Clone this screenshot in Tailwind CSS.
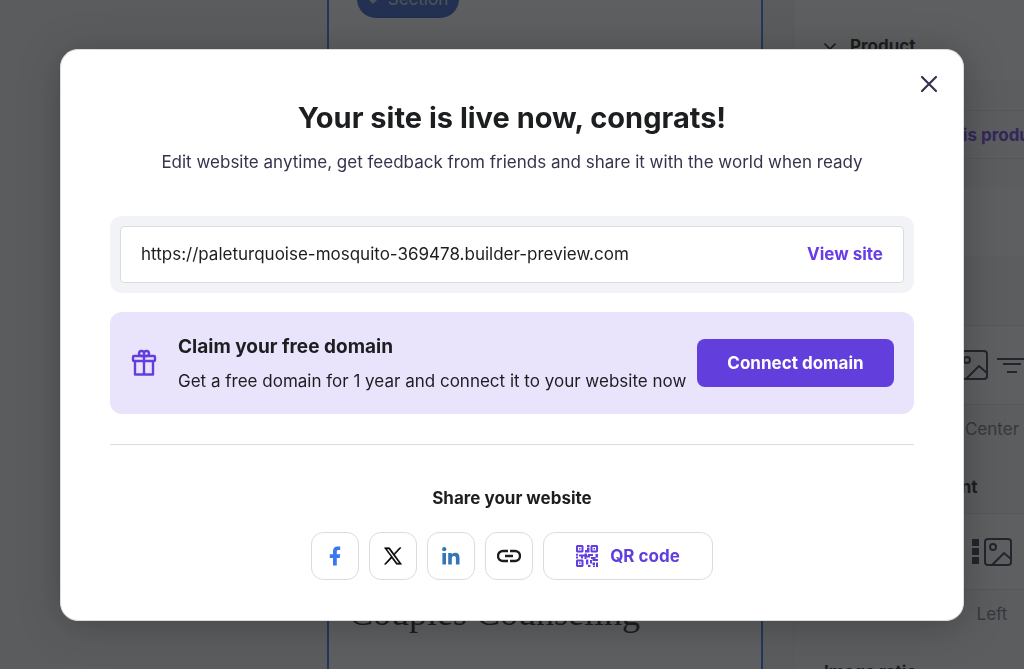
<!DOCTYPE html>
<html lang="en">

<head>
    <meta charset="UTF-8">
    <meta name="viewport" content="width=device-width, initial-scale=1.0">
    <title>Your site is live</title>
    <!-- Tailwind CSS CDN -->
    <script src="https://cdn.jsdelivr.net/npm/@tailwindcss/browser@4"></script>
</head>

<body class="h-screen overflow-hidden bg-[#efeff0] font-[Inter,sans-serif] text-[17px] leading-6 text-[#1d1e20]">

    <!-- Builder behind the dialog -->
    <div class="flex h-full overflow-hidden" aria-hidden="true">

        <!-- Canvas -->
        <main class="flex flex-1 justify-end pr-7.5">
            <section class="flex w-[436px] flex-col justify-between border-x-2 border-[#3a70f0] bg-[#f8f8f8] px-5">
                <div class="-mt-5 ml-2 flex h-[38px] w-[102px] items-center justify-center gap-2.5 rounded-full bg-[#3060c8] text-[#c8ccd4]">
                    <svg class="size-2.5" viewBox="0 0 10 10" fill="currentColor"><path d="M5 0l5 5-5 5-5-5z" /></svg>
                    <span>Section</span>
                </div>
                <h2 class="pb-9 font-[Liberation_Serif,serif] text-4xl">Couples Counseling</h2>
            </section>
        </main>

        <!-- Settings panel -->
        <aside class="flex w-[231px] flex-col overflow-hidden whitespace-nowrap border-l border-[#e4e4e6] bg-[#f0f0f1]">
            <div class="flex h-20 shrink-0 items-center gap-3.5 bg-[#f8f8f8] pt-3 pl-7.5">
                <svg class="size-3" viewBox="0 0 12 12" fill="none" stroke="currentColor" stroke-width="1.6"><path d="M0.500 3.500l5.500 5.500 5.500-5.500" /></svg>
                <span class="font-bold">Product</span>
            </div>
            <div class="mt-[30px] flex h-[49px] shrink-0 items-center border-y border-[#dcdce0] pl-38 font-bold text-[#673de6]">this product page</div>
            <div class="mt-[29px] h-[68px] shrink-0 bg-[#f8f8f8]"></div>
            <div class="mt-[69px] flex h-20 shrink-0 items-center border-y border-[#dcdce0] bg-[#f8f8f8] pl-[150px] text-[#36344d]">
                <svg class="h-8 w-20 shrink-0" viewBox="0 0 80 32" fill="none" stroke="currentColor" stroke-width="2">
                    <rect x="15" y="2" width="28" height="28" rx="3" />
                    <circle cx="23" cy="11" r="3" />
                    <path d="M22 30l13-13 8 7M53 10h32M59 15h18M63 23h10" />
                </svg>
            </div>
            <div class="flex h-12 shrink-0 items-center pl-[158px] text-[#727586]"><span class="w-20 shrink-0 text-center">Center</span></div>
            <div class="flex h-15 shrink-0 items-center pt-2 pl-7.5 font-bold">Content alignment</div>
            <div class="flex h-[77px] shrink-0 items-center border-y border-[#dcdce0] bg-[#f8f8f8] pl-[158px] text-[#36344d]">
                <svg class="h-8 w-20 shrink-0" viewBox="0 0 80 32" fill="none" stroke="currentColor" stroke-width="2">
                    <path fill="currentColor" stroke="none" d="M20 3h7v7h-7zM20 12h7v7h-7zM20 21h7v7h-7z" />
                    <rect x="33" y="3" width="26" height="26" rx="3" />
                    <circle cx="41" cy="11" r="3" />
                    <path d="M40 29l12-12 7 6" />
                </svg>
            </div>
            <div class="flex h-12 shrink-0 items-center pl-[158px] text-[#727586]"><span class="w-20 shrink-0 text-center">Left</span></div>
            <div class="mt-[22px] shrink-0 pl-7.5 font-bold">Image ratio</div>
        </aside>
    </div>

    <!-- Backdrop -->
    <div class="fixed inset-0 flex items-center justify-center bg-[#1d1e20]/70 px-15">

        <div role="dialog" aria-labelledby="dialogTitle"
            class="relative w-full max-w-[904px] rounded-[18px] border border-[#dadce0] bg-white px-[49px] pt-12 pb-10 shadow-[0_4px_40px_rgba(0,0,0,0.25)]">

            <button type="button" aria-label="Close" class="absolute top-4 right-4 flex size-9 items-center justify-center text-[#36344d]">
                <svg class="size-4" viewBox="0 0 16 16" fill="none" stroke="currentColor" stroke-width="2.2" stroke-linecap="round"><path d="M1 1l14 14M15 1L1 15" /></svg>
            </button>

            <h1 id="dialogTitle" class="text-center text-[29px] leading-10 font-bold">Your site is live now, congrats!</h1>
            <p class="mt-3 text-center text-[#36344d]">Edit website anytime, get feedback from friends and share it with the world when ready</p>

            <!-- Site address -->
            <div class="mt-[42px] rounded-xl bg-[#f2f3f6] p-2.5">
                <div class="flex h-[57px] items-center gap-5 rounded border border-[#dadce0] bg-white px-5">
                    <input type="text" readonly aria-label="Site address" value="https://paleturquoise-mosquito-369478.builder-preview.com"
                        class="min-w-0 flex-1 outline-none">
                    <a href="#" class="font-bold text-[#673de6]">View site</a>
                </div>
            </div>

            <!-- Free domain -->
            <div class="mt-[19px] flex items-center gap-2.5 rounded-xl bg-[#e9e3fc] px-5 py-[21px]">
                <svg class="mr-2.5 size-7 shrink-0 text-[#623fdc]" viewBox="0 0 28 28" fill="none" stroke="currentColor" stroke-width="2.400" stroke-linejoin="round">
                    <rect x="3" y="7" width="22" height="5" rx="1" />
                    <path d="M5 12v13.500h18V12M14 7v18.500M14 7H11a2.500 2.500 0 1 1 3-2.500zM14 7h3a2.500 2.500 0 1 0-3-2.500z" />
                </svg>
                <div class="flex-1">
                    <h2 class="text-[19px] leading-7 font-bold">Claim your free domain</h2>
                    <p class="mt-2 whitespace-nowrap">Get a free domain for 1 year and connect it to your website now</p>
                </div>
                <button type="button" class="h-12 w-[197px] shrink-0 rounded-lg bg-[#623fdc] font-bold text-white">Connect domain</button>
            </div>

            <hr class="mt-[30px] border-[#dadce0]">

            <!-- Share buttons -->
            <h3 class="mt-[41px] text-center leading-6 font-bold">Share your website</h3>
            <div class="mt-[22px] flex justify-center gap-2.5">
                <button type="button" aria-label="Facebook" class="flex size-12 items-center justify-center rounded-xl border border-[#dadce0] text-[#3b77f0]">
                    <svg class="size-5" viewBox="0 0 20 20" fill="currentColor"><path d="M8 19.500V12H4.800V8.300H8V5.500C8 2.300 9.700 0.500 12.600 0.500h2.600V4h-1.900C12.100 4 11.800 4.600 11.800 5.700V8.300h3.400l-.5 3.700h-2.900v7.500z" /></svg>
                </button>
                <button type="button" aria-label="X" class="flex size-12 items-center justify-center rounded-xl border border-[#dadce0] text-black">
                    <svg class="size-4.5" viewBox="0 0 24 24" fill="currentColor" stroke="currentColor" stroke-width="0.800"><path d="M14.200 10.200L22.700 1h-2l-7.400 8L7.400 1H.600l8.900 12.100L.600 23h2l7.800-8.500L16.600 23h6.800zM3.400 2.500h3.100l14.100 19h-3.100z" /></svg>
                </button>
                <button type="button" aria-label="LinkedIn" class="flex size-12 items-center justify-center rounded-xl border border-[#dadce0] text-[#3276b4]">
                    <svg class="size-4.5" viewBox="0 0 18 18" fill="currentColor"><circle cx="2.200" cy="2.200" r="2.100" /><path d="M.400 6h3.600v11.500H.400zM6.200 6h3.500v1.600C10.300 6.500 11.500 5.700 13.200 5.700c3.600 0 4.300 2.400 4.300 5.500v6.300h-3.600v-5.600c0-1.400 0-3-1.900-3s-2.200 1.400-2.200 2.900v5.700H6.200z" /></svg>
                </button>
                <button type="button" aria-label="Copy link" class="flex size-12 items-center justify-center rounded-xl border border-[#dadce0]">
                    <svg class="size-6" viewBox="0 0 24 24" fill="none" stroke="currentColor" stroke-width="2.400"><path d="M11 7H6a5 5 0 0 0 0 10h5M13 7h5a5 5 0 0 1 0 10h-5M8 12h8" /></svg>
                </button>
                <button type="button" class="flex h-12 w-[170px] items-center justify-center gap-3 rounded-xl border border-[#dadce0] font-bold text-[#623fdc]">
                    <svg class="size-[22px]" viewBox="0 0 22 22" fill="currentColor">
                        <path fill-rule="evenodd" d="M1 0h5.500l1 1v5.500l-1 1H1l-1-1V1zM2 2v3.500h3.500V2zM15.500 0H21l1 1v5.500l-1 1h-5.500l-1-1V1zM16.500 2v3.500H20V2zM1 14.500h5.500l1 1V21l-1 1H1l-1-1v-5.500zM2 16.500V20h3.500v-3.500z" />
                        <path d="M3 3h1.500v1.500H3zM17.500 3H19v1.500h-1.500zM3 17.500h1.500V19H3zM11 0h2.500v2H11zM9 5h2V2.500h2.500v5H9zM0 8.700h2v2H0zM3 9.500h5.500v-1H11v2h3v2h-3.500v1.500H8.500V11.500H7v2H5v-2H3zM12 9h5v2h-5zM19.500 9H22v3.500h-2.500zM0 11.500h2v2H0zM15 12h4.500v2H22v2h-5.500v-2H15zM10 14.500h2.300v5H10zM14 15h2v3.500h-2zM12 20h2.500v2H12zM16.500 17.500h2.500V20h-2.500zM17 20.500h2V22h-2zM20 17.500h2V22h-2z" />
                    </svg>
                    <span>QR code</span>
                </button>
            </div>
        </div>
    </div>

</body>

</html>
